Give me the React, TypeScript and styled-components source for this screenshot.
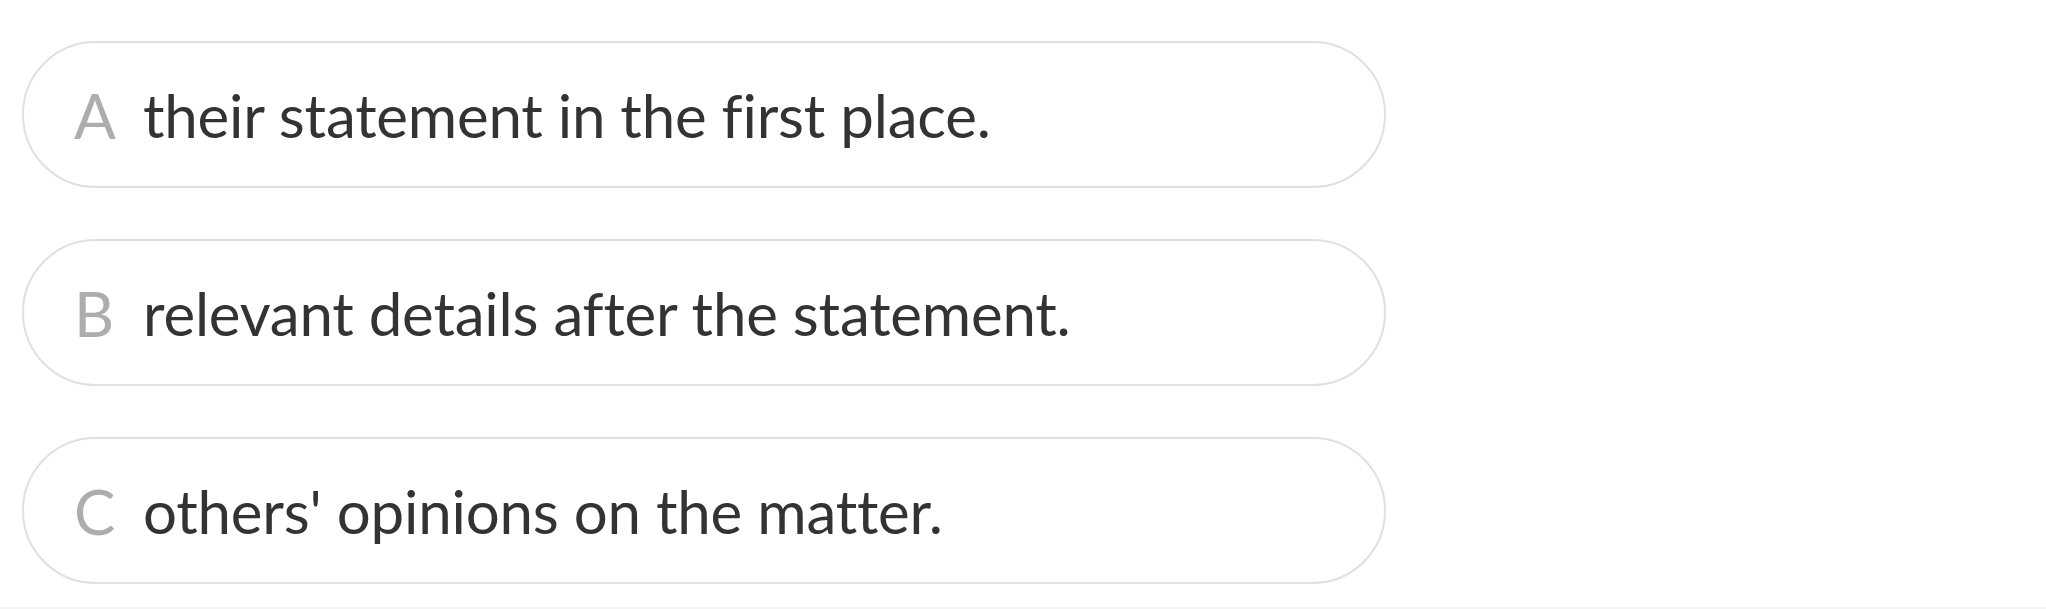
import React from 'react';
import styled, { createGlobalStyle } from 'styled-components';

const Global = createGlobalStyle`
  body {
    margin: 0;
    background: #fff;
    font-family: Lato, "Open Sans", sans-serif;
  }
`;

const Wrapper = styled.div`
  display: flex;
  flex-direction: column;
  gap: 51px;
  padding: 41px 22px 23px;
  border-bottom: 4px solid #f4f4f4;
`;

const Option = styled.div`
  box-sizing: border-box;
  width: 1364px;
  height: 147px;
  padding: 0 50px;

  display: flex;
  align-items: center;

  border: 2px solid #e0e0e0;
  border-radius: 74px;
  background: #fff;
`;

const Letter = styled.span`
  flex-shrink: 0;
  width: 69px;
  font-size: 62px;
  color: #adadad;
`;

const Text = styled.span`
  font-size: 60px;
  letter-spacing: -0.2px;
  color: #333;
  white-space: nowrap;
`;

const options = [
  { key: 'A', text: 'their statement in the first place.' },
  { key: 'B', text: 'relevant details after the statement.' },
  { key: 'C', text: "others' opinions on the matter." },
];

export default function App() {
  return (
    <>
      <Global />
      <Wrapper>
        {options.map(o => (
          <Option key={o.key}>
            <Letter>{o.key}</Letter>
            <Text>{o.text}</Text>
          </Option>
        ))}
      </Wrapper>
    </>
  );
}
